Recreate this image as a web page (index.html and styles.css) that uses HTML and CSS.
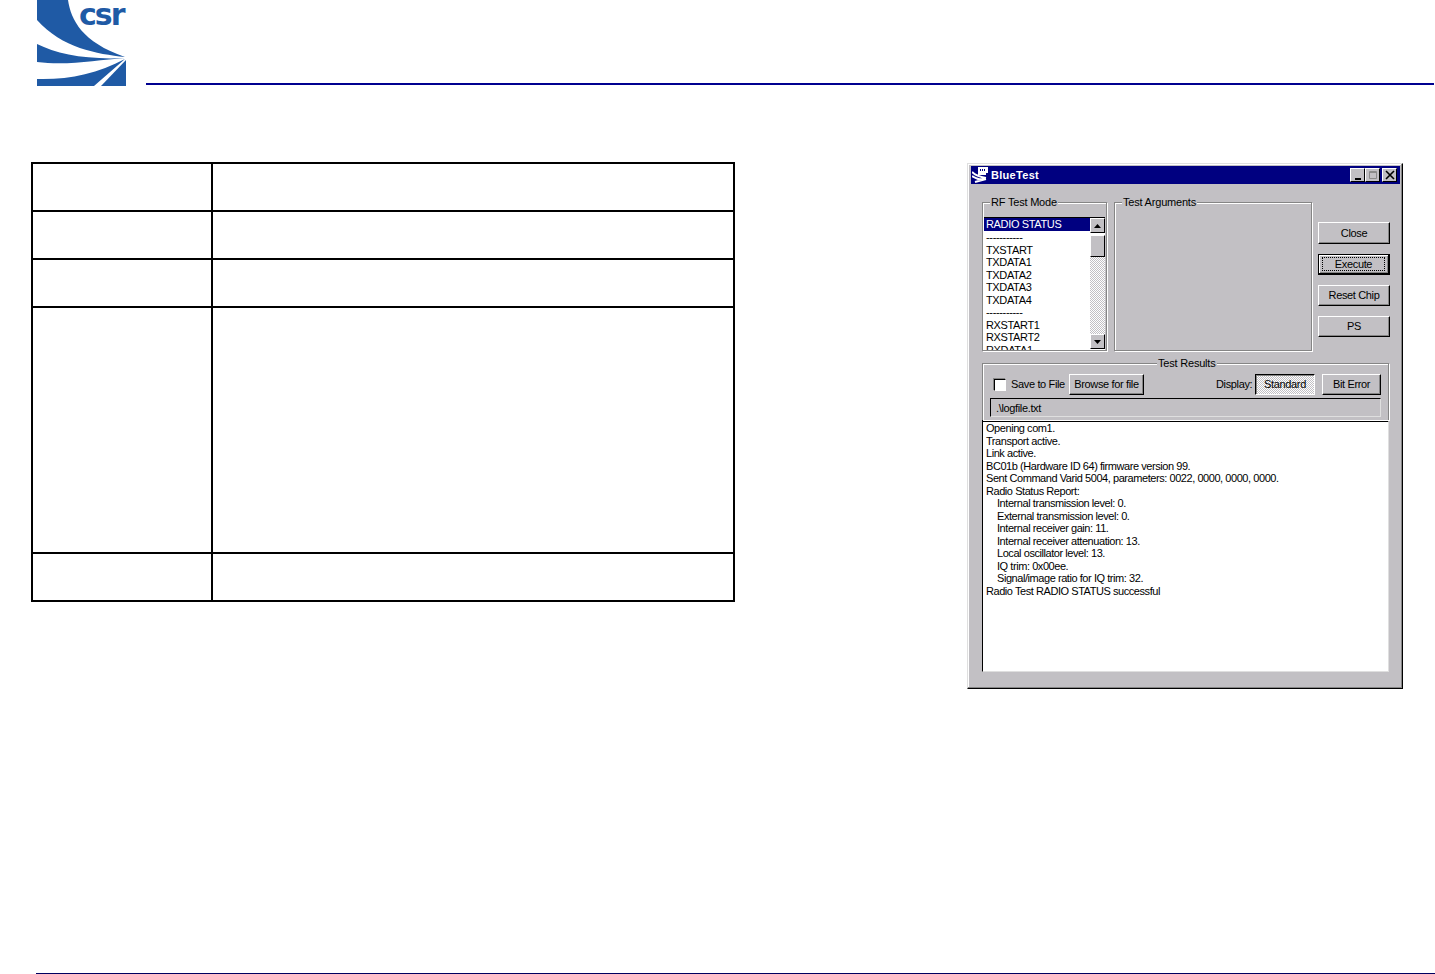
FILE: index.html
```html
<!doctype html>
<html>
    <head>
        <title>BlueTest</title>
        <link rel="stylesheet" href="styles.css">
    </head>
    <body>
        <div class="page">
            <div class="top">
                <div class="logo">
                    <svg width="89" height="86" viewBox="0 0 89 86">
                        <path fill="#1f5aa5" d="M0 0H31C34 20 45 42 88 57C60 54 25 48 0 20Z"/>
                        <path fill="#1f5aa5" d="M0 44C20 54 50 60 88 58C60 60 30 66 0 62Z"/>
                        <path fill="#1f5aa5" d="M0 79C30 80 60 74 88 59L57 86H0Z"/>
                        <path fill="#1f5aa5" d="M89 60V86H64Z"/>
                    </svg>
                    <span class="logo_text">csr</span>
                </div>
                <div class="top_rule"></div>
            </div>

            <div class="content">
                <table class="blank_table">
                    <tr class="row_short"><td class="col_a"></td><td></td></tr>
                    <tr class="row_short"><td></td><td></td></tr>
                    <tr class="row_short"><td></td><td></td></tr>
                    <tr class="row_tall"><td></td><td></td></tr>
                    <tr class="row_short"><td></td><td></td></tr>
                </table>

                <div class="window">
                    <div class="titlebar">
                        <svg class="app_icon" width="17" height="16" viewBox="0 0 17 16">
                            <path fill="#fff" d="M6 0H16V6H14V8H6Z"/>
                            <path fill="#000080" d="M8 2H9V4H8ZM10 2H11V4H10ZM12 2H13V4H12Z"/>
                            <path fill="none" stroke="#fff" stroke-width="2" d="M0 5C3 8 8 10 14 11M0 9C4 12 8 13 14 12M3 15L14 12"/>
                        </svg>
                        <span class="title_text">BlueTest</span>
                        <div class="title_btns">
                            <span class="cap_btn"><svg width="10" height="10" viewBox="0 0 10 10"><path d="M2 8H8V10H2Z"/></svg></span>
                            <span class="cap_btn"><svg width="10" height="10" viewBox="0 0 10 10"><path fill="none" stroke="#8a8a8a" d="M1.5 1.5H8.5V8.5H1.5Z"/><path stroke="#8a8a8a" d="M1 2.5H9"/></svg></span>
                            <span class="cap_btn cap_close"><svg width="10" height="10" viewBox="0 0 10 10"><path stroke="#000" stroke-width="1.6" d="M1 1L9 9M9 1L1 9"/></svg></span>
                        </div>
                    </div>

                    <div class="upper">
                        <div class="group group_mode">
                            <span class="legend">RF Test Mode</span>
                            <div class="listbox">
                                <div class="list_items">
                                    <div class="list_item selected">RADIO STATUS</div>
                                    <div class="list_item">-----------</div>
                                    <div class="list_item">TXSTART</div>
                                    <div class="list_item">TXDATA1</div>
                                    <div class="list_item">TXDATA2</div>
                                    <div class="list_item">TXDATA3</div>
                                    <div class="list_item">TXDATA4</div>
                                    <div class="list_item">-----------</div>
                                    <div class="list_item">RXSTART1</div>
                                    <div class="list_item">RXSTART2</div>
                                    <div class="list_item">RXDATA1</div>
                                </div>
                                <div class="scrollbar">
                                    <span class="scroll_btn"><svg width="7" height="4" viewBox="0 0 7 4"><path d="M3.5 0L7 4H0Z"/></svg></span>
                                    <span class="scroll_thumb"></span>
                                    <span class="scroll_track"></span>
                                    <span class="scroll_btn"><svg width="7" height="4" viewBox="0 0 7 4"><path d="M0 0H7L3.5 4Z"/></svg></span>
                                </div>
                            </div>
                        </div>

                        <div class="group group_args">
                            <span class="legend">Test Arguments</span>
                        </div>

                        <div class="side_btns">
                            <div class="btn btn_close">Close</div>
                            <div class="btn btn_default"><span class="focus_box">Execute</span></div>
                            <div class="btn">Reset Chip</div>
                            <div class="btn">PS</div>
                        </div>
                    </div>

                    <div class="group group_results">
                        <span class="legend legend_mid">Test Results</span>
                        <div class="results_row">
                            <span class="checkbox"></span>
                            <span class="save_label">Save to File</span>
                            <div class="btn btn_browse">Browse for file</div>
                            <span class="display_label">Display:</span>
                            <div class="btn btn_pressed">Standard</div>
                            <div class="btn btn_bit">Bit Error</div>
                        </div>
                        <div class="path_field">.\logfile.txt</div>
                    </div>

                    <div class="logbox">
                        <div>Opening com1.</div>
                        <div>Transport active.</div>
                        <div>Link active.</div>
                        <div>BC01b (Hardware ID 64) firmware version 99.</div>
                        <div>Sent Command Varid 5004, parameters: 0022, 0000, 0000, 0000.</div>
                        <div>Radio Status Report:</div>
                        <div class="indent">Internal transmission level: 0.</div>
                        <div class="indent">External transmission level: 0.</div>
                        <div class="indent">Internal receiver gain: 11.</div>
                        <div class="indent">Internal receiver attenuation: 13.</div>
                        <div class="indent">Local oscillator level: 13.</div>
                        <div class="indent">IQ trim: 0x00ee.</div>
                        <div class="indent">Signal/image ratio for IQ trim: 32.</div>
                        <div>Radio Test RADIO STATUS successful</div>
                    </div>
                </div>
            </div>

            <div class="bottom_rule"></div>
        </div>
    </body>
</html>
```

FILE: styles.css
```css
html, body {
    padding: 0;
    margin: 0;
    background-color: #fff;
}
.page {
    height: 974px;
    display: flex;
    flex-direction: column;
    overflow: hidden;
    font-family: "Liberation Sans", Arial, sans-serif;
    font-size: 11px;
    color: #000;
}

/* header */
.top {
    height: 86px;
    display: flex;
    align-items: flex-end;
    padding-left: 37px;
}
.logo {
    position: relative;
    width: 89px;
    height: 86px;
}
.logo svg {
    display: block;
}
.logo_text {
    position: absolute;
    left: 42px;
    top: 0;
    font-size: 30px;
    line-height: 30px;
    font-weight: bold;
    font-family: "DejaVu Sans", sans-serif;
    letter-spacing: -2px;
    color: #1f5aa5;
}
.top_rule {
    flex: 1;
    height: 2px;
    margin: 0 1px 1px 20px;
    background-color: #000090;
}
.bottom_rule {
    height: 1px;
    margin: auto 0 0 36px;
    background-color: #000060;
}

/* left table */
.content {
    display: flex;
    justify-content: space-between;
    align-items: flex-start;
    padding: 76px 32px 0 31px;
}
.blank_table {
    width: 704px;
    border-collapse: collapse;
    margin: 0;
    border: 2px solid #000;
}
.blank_table td {
    border: 2px solid #000;
    padding: 0;
}
.col_a {
    width: 178px;
}
.row_short {
    height: 48px;
}
.row_tall {
    height: 246px;
}

/* dialog */
.window {
    width: 436px;
    height: 526px;
    box-sizing: border-box;
    margin-top: 1px;
    padding: 2px 2px 0 3px;
    background-color: #c2c0c4;
    border: 1px solid;
    border-color: #dfdfdf #000 #000 #dfdfdf;
    box-shadow: inset -1px -1px 0 #858585, inset 1px 1px 0 #fff;
    line-height: 12.5px;
    letter-spacing: -0.35px;
}
.titlebar {
    height: 18px;
    display: flex;
    align-items: center;
    padding: 0 3px 0 1px;
    background-color: #000080;
    color: #fff;
}
.app_icon {
    margin-right: 2px;
}
.title_text {
    font-weight: bold;
    letter-spacing: 0.3px;
}
.title_btns {
    margin-left: auto;
    display: flex;
}
.cap_btn {
    width: 15px;
    height: 14px;
    box-sizing: border-box;
    display: flex;
    align-items: center;
    justify-content: center;
    background-color: #c2c0c4;
    border: 1px solid;
    border-color: #fff #000 #000 #fff;
}
.cap_close {
    margin-left: 2px;
}

/* group boxes */
.upper {
    display: flex;
    align-items: flex-start;
    padding: 18px 0 0 11px;
}
.group {
    position: relative;
    box-sizing: border-box;
    border: 1px solid #858585;
    box-shadow: 1px 1px 0 #fff, inset 1px 1px 0 #fff;
}
.legend {
    position: absolute;
    top: -7px;
    left: 7px;
    padding: 0 1px;
    background-color: #c2c0c4;
    white-space: nowrap;
    letter-spacing: -0.2px;
}
.legend_mid {
    left: 174px;
}
.group_mode {
    width: 125px;
    height: 149px;
    padding: 14px 1px 0 1px;
}
.group_args {
    width: 198px;
    height: 149px;
    margin-left: 7px;
}

/* list */
.listbox {
    box-sizing: border-box;
    height: 133px;
    display: flex;
    overflow: hidden;
    background-color: #fff;
    border-top: 1px solid #000;
}
.list_items {
    flex: 1;
    overflow: hidden;
}
.list_item {
    height: 12.5px;
    padding-left: 2px;
    white-space: nowrap;
}
.list_item.selected {
    height: 13px;
    background-color: #000080;
    color: #fff;
}
.scrollbar {
    width: 15px;
    padding-bottom: 1px;
    display: flex;
    flex-direction: column;
    background-color: #fff;
}
.scroll_btn, .scroll_thumb {
    box-sizing: border-box;
    flex: none;
    width: 15px;
    height: 15px;
    display: flex;
    align-items: center;
    justify-content: center;
    background-color: #c2c0c4;
    border: 1px solid;
    border-color: #fff #000 #000 #fff;
}
.scroll_thumb {
    height: 22px;
    margin-top: 2px;
}
.scroll_track {
    flex: 1;
    background: repeating-conic-gradient(#c2c0c4 0 25%, #fff 0 50%) 0 0 / 2px 2px;
}

/* buttons */
.side_btns {
    width: 72px;
    margin-left: 6px;
    padding-top: 20px;
    display: flex;
    flex-direction: column;
    gap: 10px;
}
.btn {
    box-sizing: border-box;
    flex: none;
    height: 21px;
    display: flex;
    align-items: center;
    justify-content: center;
    background-color: #c2c0c4;
    white-space: nowrap;
    border: 1px solid;
    border-color: #fff #000 #000 #fff;
    box-shadow: inset -1px -1px 0 #858585;
}
.btn_close {
    height: 22px;
}
.btn_default {
    padding: 3px;
    border: 1px solid #000;
    border-width: 1px 2px 2px 1px;
    box-shadow: inset 1px 1px 0 #fff, inset -1px -1px 0 #858585;
}
.focus_box {
    flex: 1;
    height: 100%;
    display: flex;
    align-items: center;
    justify-content: center;
    border: 1px dotted #000;
}

/* test results */
.group_results {
    width: 407px;
    height: 57px;
    margin: 12px 0 0 11px;
    padding: 10px 7px 0 7px;
    border-bottom: 0;
}
.results_row {
    height: 21px;
    display: flex;
    align-items: center;
}
.checkbox {
    box-sizing: border-box;
    flex: none;
    width: 12px;
    height: 12px;
    margin-left: 4px;
    background-color: #fff;
    border: 1px solid;
    border-color: #000 #fff #fff #000;
    box-shadow: -1px -1px 0 #858585;
}
.save_label {
    width: 54px;
    margin-left: 5px;
    white-space: nowrap;
}
.btn_browse {
    width: 75px;
    margin-left: 4px;
}
.display_label {
    width: 34px;
    margin-left: 72px;
    white-space: nowrap;
}
.btn_pressed {
    width: 60px;
    margin-left: 5px;
    border-color: #000 #fff #fff #000;
    box-shadow: inset 1px 1px 0 #858585;
    background: repeating-conic-gradient(#c2c0c4 0 25%, #fff 0 50%) 0 0 / 2px 2px;
}
.btn_bit {
    width: 59px;
    margin-left: 7px;
}
.path_field {
    box-sizing: border-box;
    height: 19px;
    margin-top: 3px;
    padding: 3px 0 0 5px;
    border: 1px solid;
    border-color: #000 #dfdfdf #dfdfdf #000;
}
.logbox {
    box-sizing: border-box;
    width: 407px;
    height: 252px;
    margin-left: 11px;
    padding: 0 0 0 3px;
    background-color: #fff;
    border: 1px solid;
    border-color: #000 #dfdfdf #dfdfdf #000;
    border-top-width: 2px;
    letter-spacing: -0.44px;
}
.indent {
    padding-left: 11px;
}
```
